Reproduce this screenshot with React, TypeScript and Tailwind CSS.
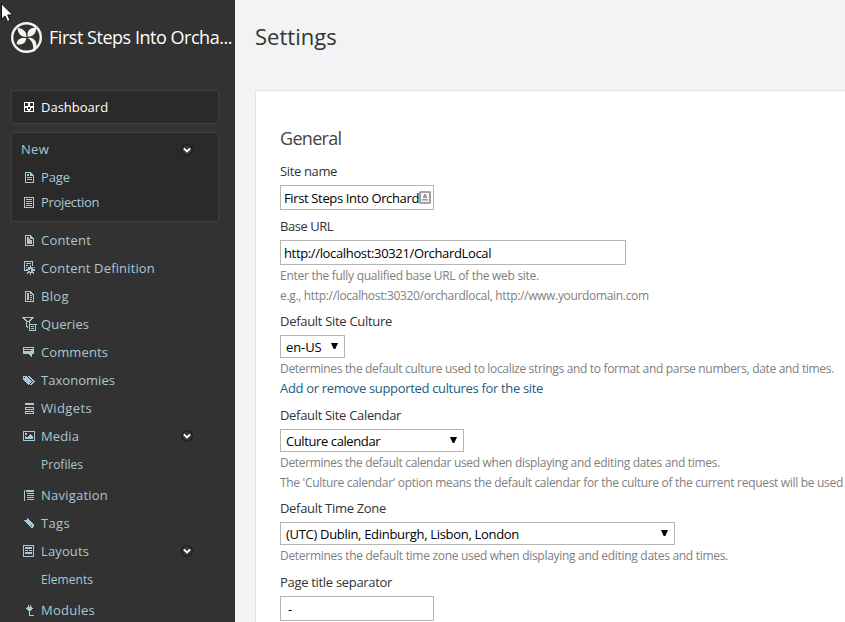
import type { ReactNode } from "react";

const GLYPHS = {
  dashboard: [
    "##########", "#...##...#", "#...##...#", "#...##...#", "##########",
    "####..####", "#..#..#..#", "#..####..#", "#...##...#", "##########",
  ],
  page: [
    "######...", "#....##..", "#.##.###.", "#.##.####", "#.......#", "#.#####.#",
    "#.......#", "#.#####.#", "#.......#", "#.......#", "#########",
  ],
  list: [
    "##########", "#........#", "#.######.#", "#........#", "#.######.#", "#........#",
    "#.######.#", "#........#", "#.######.#", "#........#", "##########",
  ],
  content: [
    "######...", "#....##..", "#.##.###.", "#.##.####", "#.###...#", "#.#####.#",
    "#.#####.#", "#.#####.#", "#.#####.#", "#.......#", "#########",
  ],
  definition: [
    "#########..", "#.......#..", "#.#####.#..", "#.......#..", "#.##..#.#..", "#.....#....",
    "#.#.#####.#", "#...#####..", "#.####.####", "####...####", "....##.##..", "...#######.",
    "...#..#..#.", "......#....",
  ],
  blog: [
    "######...", "#....##..", "#.##.###.", "#.##...##", "#.##.##.#", "#.##....#",
    "#.##.##.#", "#.##....#", "#.##.##.#", "#.......#", "#########",
  ],
  queries: [
    "############...", ".##......##....", "..##....##.....", "...##..##......", "....####.......",
    "....#..#.......", "....#..#.......", "....#..########", "....#..#.....#.", "....##.#.###.#.",
    ".....#.#.....#.", ".......#.###.#.", ".......#.....#.", ".......#######.",
  ],
  comments: [
    "###########", "#.........#", "###########", "#.......###", "###########", "###########",
    "###########", "......###..", ".......##..", "........#..",
  ],
  taxonomies: [
    "####.##.....", "#.###.##....", "######.##...", "#######.##..", ".#######.##.", "..#######.##",
    "...#####.##.", "....###.##..", ".....#.##...",
  ],
  widgets: [
    "#########", "#########", ".........", ".........", "#########", "#.......#",
    "#########", ".........", "#########", "#.......#", "#########",
  ],
  media: [
    "############", "#..........#", "#.##.......#", "#.##...#...#", "#.....###..#", "#.#..#####.#",
    "#.########.#", "#.########.#", "#..........#", "############",
  ],
  navigation: [
    "#.########", "#.########", "#.........", "#..#######", "#.........", "#..#######",
    "#.........", "#..#######", "#.........", "#..#######", "#.........",
  ],
  tag: [
    "...#......", "...##.....", "######....", ".######...", "..######..", "...######.",
    "....######", ".....##.##", "......####", ".......##.",
  ],
  layouts: [
    "###########", "#.........#", "#.#######.#", "#.#######.#", "#.........#", "#.###.###.#",
    "#.........#", "#.#######.#", "#.#######.#", "#.........#", "#.........#", "###########",
  ],
  modules: [
    "..#.#...", "..#.#...", ".#####..", "#######.", ".#####..", "..###...",
    "...#....", "...#....", "...#....", "...#....", "...#####",
  ],
} as const;

type GlyphName = keyof typeof GLYPHS;

function Glyph({ name }: { name: GlyphName }) {
  const rows = GLYPHS[name];
  const d = rows
    .flatMap((row, y) => [...row].map((c, x) => (c === "#" ? `M${x} ${y}h1v1h-1z` : "")))
    .join("");
  return (
    <svg width={rows[0].length} height={rows.length} shapeRendering="crispEdges" className="block shrink-0">
      <path d={d} fill="currentColor" />
    </svg>
  );
}

function Toggle() {
  return (
    <svg width="12" height="12" viewBox="0 0 12 12" className="block shrink-0">
      <circle cx="6" cy="6" r="5.3" fill="#36363b" stroke="#1c1c21" strokeWidth="1.2" />
      <path d="M2.8 4.400 6 7.400 9.200 4.400" fill="none" stroke="#fff" strokeWidth="1.9" />
    </svg>
  );
}

function NavItem({ icon, label, pad, row = "h-7", tracking, toggle }: {
  icon?: GlyphName; label: string; pad: string; row?: string; tracking: string; toggle?: boolean;
}) {
  return (
    <li className={`flex items-center ${row}`}>
      <span className={`flex w-[41px] shrink-0 items-center ${pad}`}>{icon && <Glyph name={icon} />}</span>
      <span className={`w-[139.500px] pt-0.5 whitespace-nowrap ${tracking}`}>{label}</span>
      {toggle && <span className="w-3"><Toggle /></span>}
    </li>
  );
}

function Label({ children, tracking = "tracking-[-0.31px]" }: { children: ReactNode; tracking?: string }) {
  return <label className={`mb-[3px] block h-5 text-[13px] leading-[18px] text-[#333] ${tracking}`}>{children}</label>;
}

function Help({ children, tracking }: { children: ReactNode; tracking: string }) {
  return <p className={`h-5 text-[12px] leading-5 whitespace-nowrap text-[#808080] ${tracking}`}>{children}</p>;
}

function Select({ children, width, tracking }: { children: ReactNode; width: string; tracking: string }) {
  return (
    <div className={`mb-px flex h-[23px] items-center justify-between border border-[#b5b5b5] bg-white pr-[6px] pl-[5px] ${width}`}>
      <span className={`text-[13px] leading-5 whitespace-nowrap text-black ${tracking}`}>{children}</span>
      <svg width="7" height="6" viewBox="0 0 7 6" className="mb-0.5 block"><path d="M0 0h7L4.300 6H2.700z" fill="#000" /></svg>
    </div>
  );
}

function Input({ children, width, tracking }: { children: ReactNode; width: string; tracking: string }) {
  return (
    <div className={`flex h-[25px] items-center border border-[#b5b5b5] bg-white pt-0.5 pl-[3px] text-[13px] whitespace-nowrap text-black ${width} ${tracking}`}>
      {children}
    </div>
  );
}

export default function App() {
  return (
    <div className="relative flex h-[622px] w-[845px] overflow-hidden bg-[#f2f3f5] font-['Open_Sans',sans-serif]">
      <aside className="w-[235px] shrink-0 bg-[#323232] text-[13px] text-[#aac7d3]">
        <header className="flex h-[90px] items-start pt-[21px] pl-[10px]">
          <svg width="33" height="33" viewBox="0 0 33 33" className="block shrink-0 text-[#f5f5ed]">
            <circle cx="16.5" cy="16.5" r="14.3" fill="none" stroke="currentColor" strokeWidth="2.4" />
            <g fill="currentColor">
              <path d="M16.500 16C11 16 8 13 7.500 7c5.500.5 9 3.500 9 9z" />
              <path d="M17.800 15.800C16.500 10.500 19.500 6.500 26 6.500c.5 5.500-2.500 9-8.200 9.300z" />
              <path d="M16.300 17.200c-.5 5-4 7-9.500 6-.3-4.500 3.700-7.200 9.500-6z" />
              <path d="M17.800 17c3.500-.8 6 .4 7.800 3.500 1.500 3 1.200 6.500-.6 9.500l-2.700.8c2.200-5.500.5-10.300-4.500-13.800z" />
            </g>
          </svg>
          <h1 className="ml-[6px] text-[18px] leading-[32px] font-normal tracking-[-0.47px] whitespace-nowrap text-white">First Steps Into Orcha...</h1>
        </header>
        <nav>
          <div className="ml-[11px] flex h-[34px] w-[208px] items-center rounded-[2px] border border-[#3e3e43] bg-[#2a2a2a] text-white">
            <span className="w-[29px] pl-3"><Glyph name="dashboard" /></span>
            <span className="pt-0.5">Dashboard</span>
          </div>
          <div className="mt-2 ml-[11px] h-[90px] w-[208px] rounded-[2px] border border-[#3e3e43] bg-[#2a2a2a] pt-[3px]">
            <div className="flex h-7 items-center pl-[9px]">
              <span className="w-[159.500px] tracking-[0.28px]">New</span>
              <span className="pb-px"><Toggle /></span>
            </div>
            <ul className="-ml-3">
              <NavItem icon="page" label="Page" pad="pl-[25px]" row="h-[26px]" tracking="tracking-[-0.1px]" />
              <NavItem icon="list" label="Projection" pad="pl-6" row="h-[24px]" tracking="tracking-[-0.34px]" />
            </ul>
          </div>
          <ul className="pt-1">
            <NavItem icon="content" label="Content" pad="pl-[25px]" tracking="tracking-[0.21px]" />
            <NavItem icon="definition" label="Content Definition" pad="pl-6" tracking="tracking-[0.15px]" />
            <NavItem icon="blog" label="Blog" pad="pl-[25px]" tracking="tracking-[0.3px]" />
            <NavItem icon="queries" label="Queries" pad="pl-[22px]" tracking="tracking-[0.08px]" />
            <NavItem icon="comments" label="Comments" pad="pl-[23px]" tracking="tracking-[0.1px]" />
            <NavItem icon="taxonomies" label="Taxonomies" pad="pl-[23px]" tracking="tracking-[0.04px]" />
            <NavItem icon="widgets" label="Widgets" pad="pl-[25px]" tracking="tracking-[0.36px]" />
            <NavItem icon="media" label="Media" pad="pl-[23px]" tracking="tracking-[0.11px]" toggle />
            <NavItem label="Profiles" pad="" row="h-7 text-[12px]" tracking="tracking-[0.01px]" />
            <NavItem icon="navigation" label="Navigation" pad="pl-6" row="h-7 mt-[3px]" tracking="tracking-[0.22px]" />
            <NavItem icon="tag" label="Tags" pad="pl-6" tracking="tracking-[0.34px]" />
            <NavItem icon="layouts" label="Layouts" pad="pl-[23px]" tracking="tracking-[0.12px]" toggle />
            <NavItem label="Elements" pad="" row="h-7 text-[12px]" tracking="tracking-[0.04px]" />
            <NavItem icon="modules" label="Modules" pad="pl-[26px]" row="h-7 mt-[3px]" tracking="tracking-[0.25px]" />
          </ul>
        </nav>
      </aside>
      <main className="w-[610px] shrink-0 pl-5">
        <h2 className="h-[90px] pt-5 text-[22px] leading-8 font-normal tracking-[0.02px] text-[#333]">Settings</h2>
        <section className="h-[560px] w-[640px] rounded-tl-[2px] border border-[#e3e4e7] bg-white pt-[34px] pl-6">
          <h3 className="mb-[11px] h-[26px] text-[18px] leading-[26px] tracking-[-0.7px] text-[#444]">General</h3>
          <Label tracking="tracking-[-0.36px]">Site name</Label>
          <Input width="w-[154px]" tracking="tracking-[-0.36px]">
            <span className="w-[135px] shrink-0">First Steps Into Orchard</span>
            <svg width="12" height="13" viewBox="0 0 12 13" className="mb-0.5 block shrink-0">
              <rect x="1" y="1" width="10" height="11" rx=".5" fill="#f4f4f4" stroke="#8b8b8b" strokeWidth="1.6" />
              <path d="M5 3h2v2h1v2H4V5h1zM3 8h6v1.500H3z" fill="#999" />
            </svg>
          </Input>
          <div className="mt-[7px]">
            <Label tracking="tracking-[-0.47px]">Base URL</Label>
            <Input width="w-[346px]" tracking="tracking-[-0.35px]">http://localhost:30321/OrchardLocal</Input>
            <div className="pt-px">
              <Help tracking="tracking-[-0.28px]">Enter the fully qualified base URL of the web site.</Help>
              <Help tracking="tracking-[-0.325px]">e.g., http://localhost:30320/orchardlocal, http://www.yourdomain.com</Help>
            </div>
          </div>
          <div className="mt-1.5">
            <Label tracking="tracking-[-0.3px]">Default Site Culture</Label>
            <Select width="w-[65px]" tracking="tracking-[-0.1px]">en-US</Select>
            <Help tracking="tracking-[-0.323px]">Determines the default culture used to localize strings and to format and parse numbers, date and times.</Help>
            <a className="block h-5 text-[13px] leading-[18px] tracking-[-0.333px] text-[#1e5d7d]">Add or remove supported cultures for the site</a>
          </div>
          <div className="mt-[7px]">
            <Label tracking="tracking-[-0.32px]">Default Site Calendar</Label>
            <Select width="w-[184px]" tracking="tracking-[-0.4px]">Culture calendar</Select>
            <Help tracking="tracking-[-0.317px]">Determines the default calendar used when displaying and editing dates and times.</Help>
            <Help tracking="tracking-[-0.311px]">The 'Culture calendar' option means the default calendar for the culture of the current request will be used</Help>
          </div>
          <div className="mt-1.5">
            <Label>Default Time Zone</Label>
            <Select width="w-[395px]" tracking="tracking-[-0.308px]">(UTC) Dublin, Edinburgh, Lisbon, London</Select>
            <Help tracking="tracking-[-0.298px]">Determines the default time zone used when displaying and editing dates and times.</Help>
          </div>
          <div className="mt-[7px]">
            <Label>Page title separator</Label>
            <Input width="w-[154px]" tracking="tracking-normal"><span className="pl-1">-</span></Input>
          </div>
        </section>
      </main>
      <svg width="13" height="20" viewBox="0 0 13 20" className="absolute top-[3px] left-px">
        <path d="M.5.8v15.500l3.600-3.400 2.400 5.600 2.600-1.100-2.400-5.500h5z" fill="#fff" stroke="#111" strokeWidth="1" />
      </svg>
    </div>
  );
}
